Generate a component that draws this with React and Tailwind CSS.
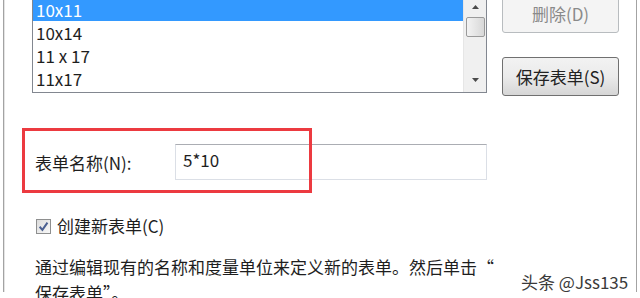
import React from 'react'

const FONT = { fontFamily: '"Noto Sans CJK SC", "Noto Sans", sans-serif' }

const ROWS = ['10x11', '10x14', '11 x 17', '11x17']

function ScrollBar() {
  return (
    <div className="flex h-full w-[23px] flex-col items-center border-l border-[#e6e6e6] bg-[#f0f0f0]">
      <div className="flex h-[20px] w-full items-center justify-center">
        <svg width="7" height="4" viewBox="0 0 7 4">
          <path d="M0 4 L3.5 0 L7 4 Z" fill="#4a4a4a" />
        </svg>
      </div>
      <div className="h-[20px] w-[19px] rounded-[2px] border border-[#9a9a9a] bg-gradient-to-r from-[#f3f3f3] to-[#d8d8d8]" />
      <div className="flex-1" />
      <div className="flex h-[24px] w-full items-center justify-center">
        <svg width="7" height="4" viewBox="0 0 7 4">
          <path d="M0 0 L7 0 L3.5 4 Z" fill="#4a4a4a" />
        </svg>
      </div>
    </div>
  )
}

function Button({ children, disabled }) {
  return (
    <div
      className={
        disabled
          ? 'flex h-[39px] w-[117px] items-center justify-center rounded-[3px] border border-[#b8bcbf] bg-[#f4f4f4] text-[17px] text-[#8a8a8a]'
          : 'flex h-[39px] w-[117px] items-center justify-center rounded-[3px] border border-[#707070] bg-gradient-to-b from-[#f2f2f2] via-[#ebebeb] to-[#d6d6d6] text-[17px] text-[#222]'
      }
    >
      {children}
    </div>
  )
}

export default function App() {
  return (
    <div className="relative h-[298px] w-[640px] overflow-hidden bg-white pl-[3px]" style={FONT}>
      <div className="h-full w-[634px] border-l border-r border-[#a3a3a3]">
        <div className="h-full border-l border-[#e4e4e4]">
          <div className="-mt-[6px] flex flex-col">
            {/* list + buttons */}
            <div className="flex h-[102px] items-start pl-[27px]">
              <div className="mt-[2px] flex h-[97px] w-[455px] border border-[#828790] bg-white">
                <div className="flex-1 pt-px">
                  {ROWS.map((r, i) => (
                    <div
                      key={r}
                      className={
                        i === 0
                          ? 'flex h-[23px] items-center bg-[#3399ff] pl-[3px] text-[17px] leading-none text-white'
                          : 'flex h-[23px] items-center pl-[3px] text-[17px] leading-none text-[#1e1e1e]'
                      }
                    >
                      {r}
                    </div>
                  ))}
                </div>
                <ScrollBar />
              </div>
              <div className="ml-[15px] flex flex-col gap-[24px]">
                <Button disabled>删除(D)</Button>
                <Button>保存表单(S)</Button>
              </div>
            </div>

            {/* form name */}
            <div className="mt-[48px] flex h-[36px] items-center pl-[30px]">
              <div className="w-[140px] pt-[2px] text-[17px] text-[#1e1e1e]">表单名称(N):</div>
              <div className="flex h-[36px] w-[312px] items-center border border-[#dbdfe6] border-t-[#abadb3] pl-[7px] text-[17px] text-[#1e1e1e]">
                <span className="-mt-[4px]">5*10</span>
              </div>
            </div>

            {/* checkbox */}
            <div className="mt-[34px] flex h-[24px] items-center pl-[31px]">
              <div className="flex h-[15px] w-[15px] items-center justify-center border border-[#8e8f8f] bg-gradient-to-br from-[#dcdcdc] to-[#f8f8f8]">
                <svg width="11" height="11" viewBox="0 0 10 10">
                  <path d="M1.5 5.2 L4 8 L8.6 1.5" fill="none" stroke="#4a5f91" strokeWidth="1.8" />
                </svg>
              </div>
              <span className="ml-[6px] text-[17px] text-[#1e1e1e]">创建新表单(C)</span>
            </div>

            {/* description */}
            <div className="mt-[16px] whitespace-nowrap pl-[30px] text-[17px] leading-[26px] text-[#1e1e1e]">
              通过编辑现有的名称和度量单位来定义新的表单。然后单击“
              <br />
              保存表单”。
            </div>
          </div>
        </div>
      </div>

      {/* annotation box */}
      <div className="absolute left-[22px] top-[128px] h-[65px] w-[290px] border-[3px] border-[#ec3a40]" />

      {/* watermark */}
      <div className="absolute left-[521px] top-[271px] whitespace-nowrap text-[17px] leading-[22px] text-[#3a3a3a] [text-shadow:0_0_2px_#fff]">
        头条 @Jss135
      </div>
    </div>
  )
}
